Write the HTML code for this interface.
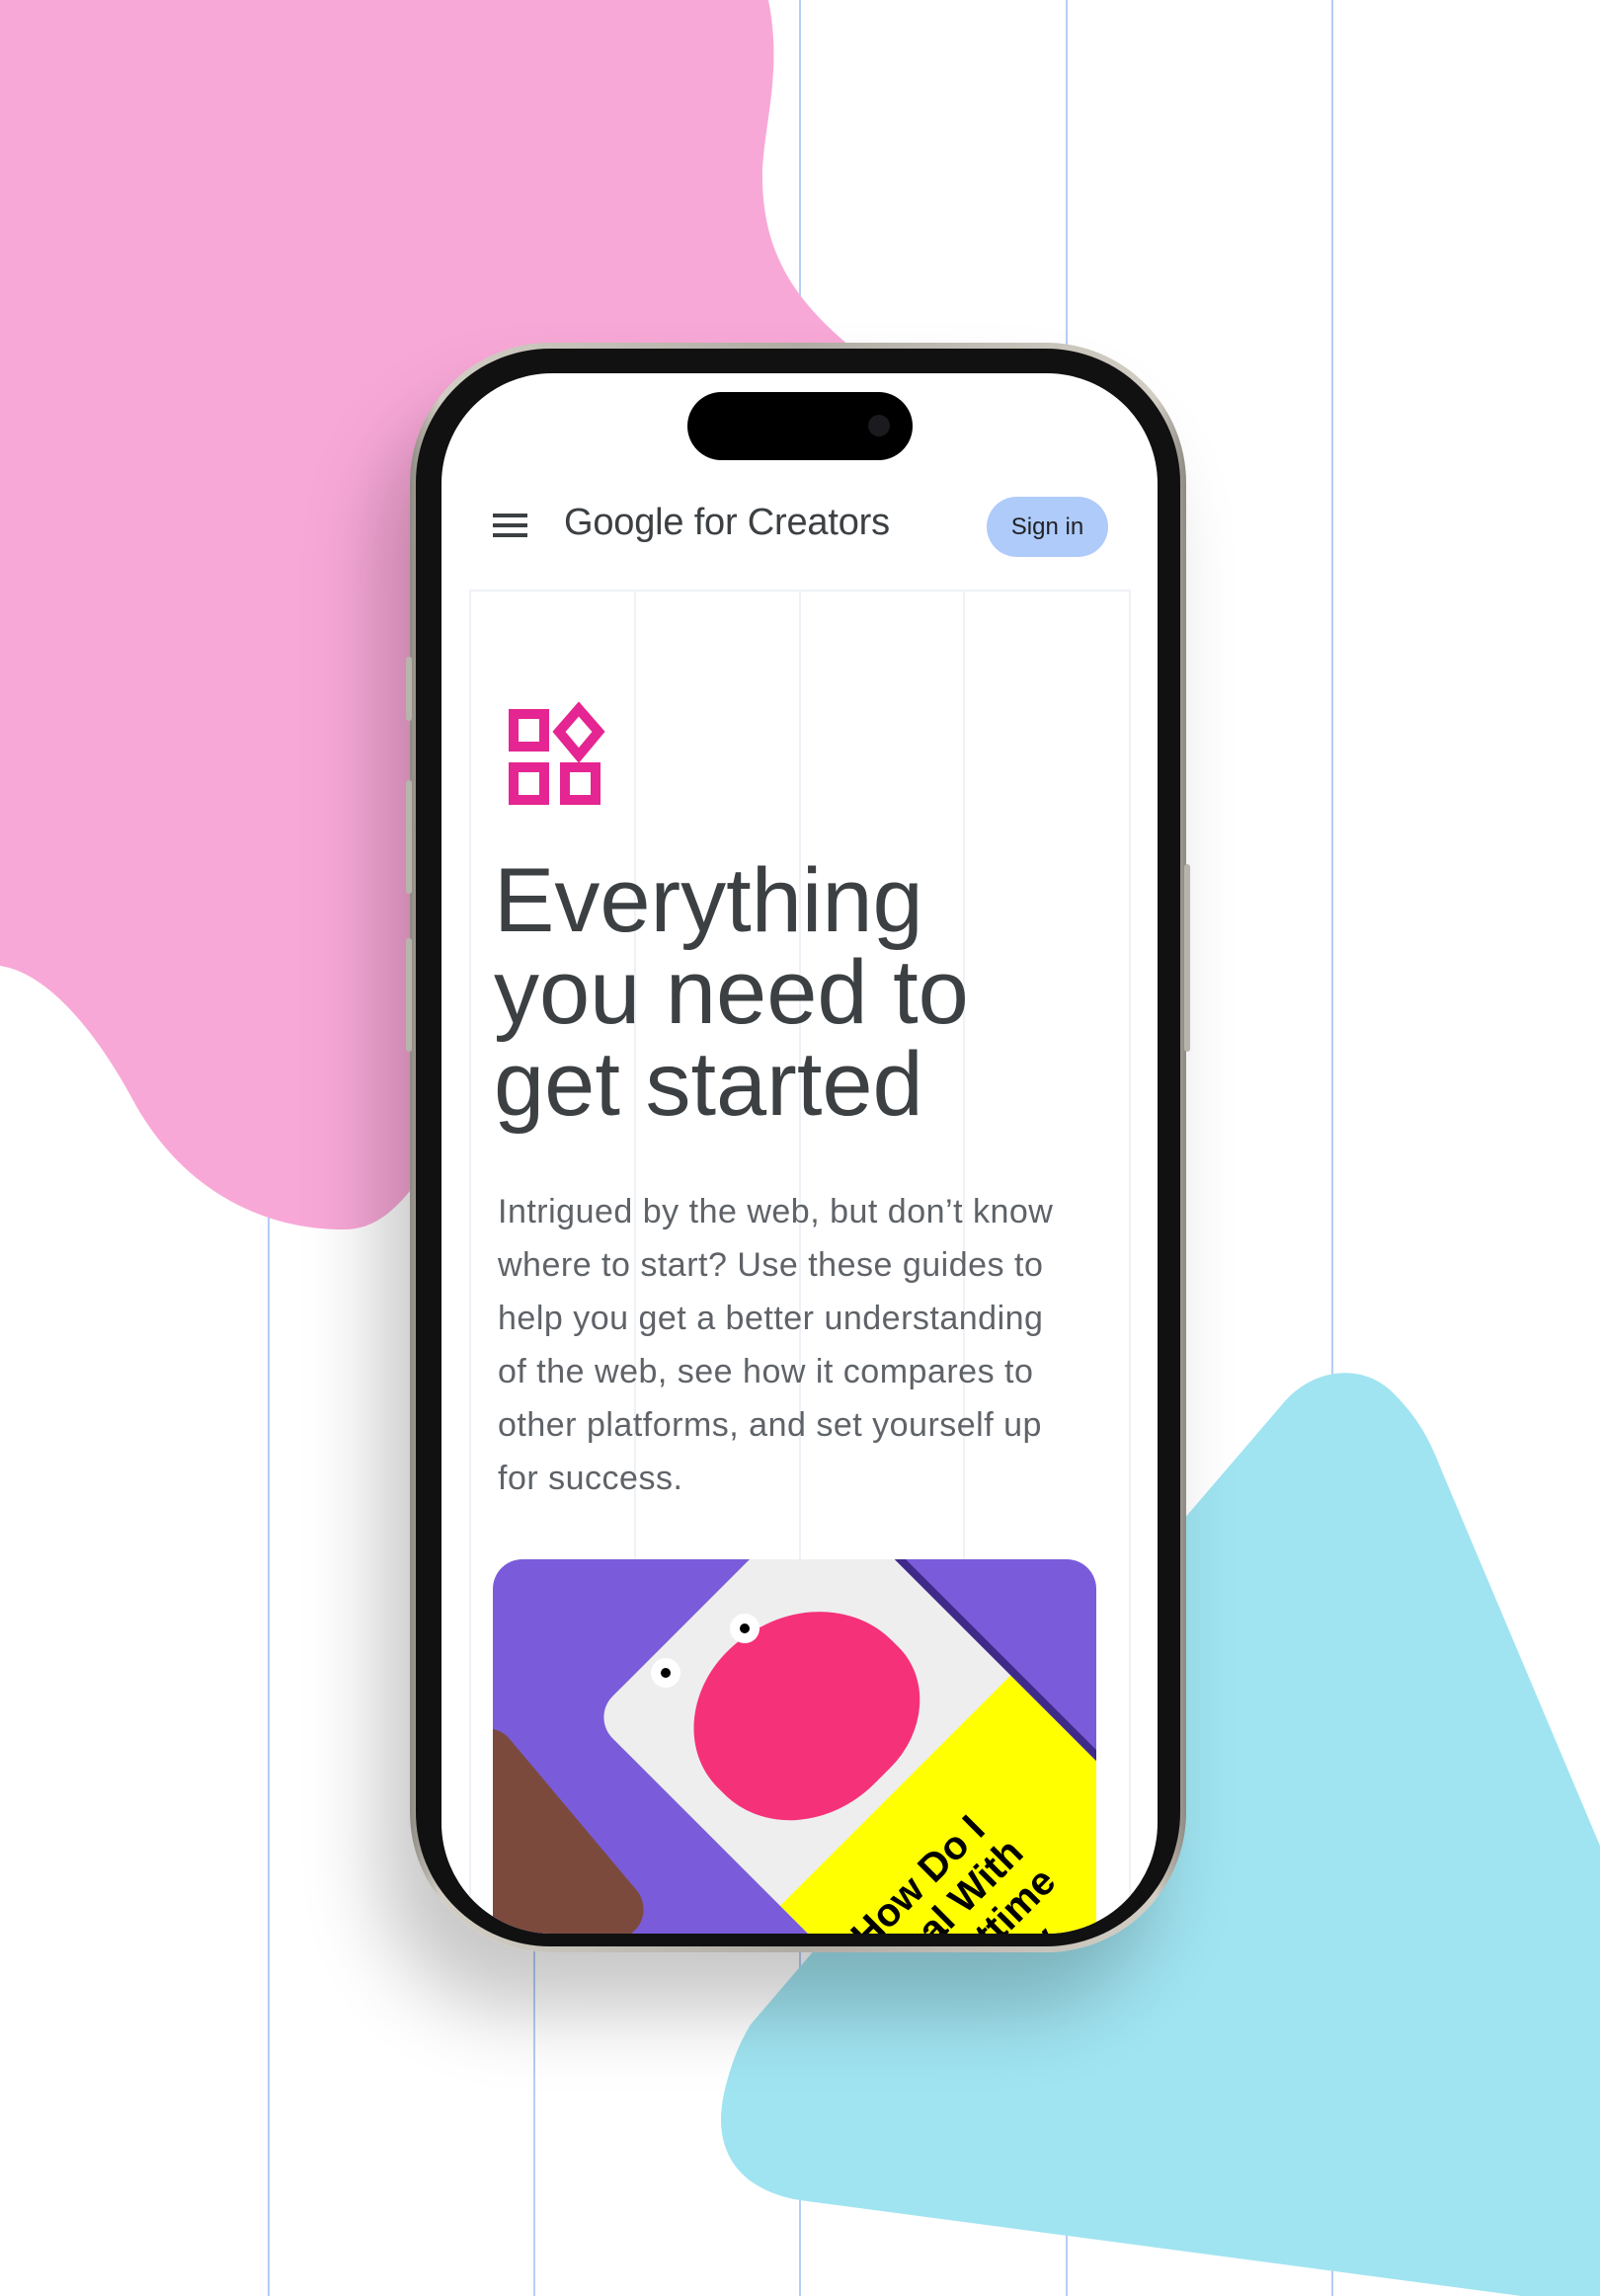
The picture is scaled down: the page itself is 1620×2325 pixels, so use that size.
<!DOCTYPE html>
<html><head><meta charset="utf-8"><style>
*{margin:0;padding:0;box-sizing:border-box}
body{width:1620px;height:2325px;position:relative;overflow:hidden;background:#fff;font-family:"Liberation Sans",sans-serif}
.vl{position:absolute;top:0;width:2px;height:2325px;background:#b5cdf7}
.abs{position:absolute}
</style></head><body>
<div class="vl" style="left:271px"></div>
<div class="vl" style="left:540px"></div>
<div class="vl" style="left:809px"></div>
<div class="vl" style="left:1079px"></div>
<div class="vl" style="left:1348px"></div>
<svg class="abs" style="left:0;top:0" width="1620" height="2325">
<path d="M0,0 L778,0 C792,70 775,120 772,170 C770,250 800,300 860,350 L860,1200 L420,1200 C400,1225 380,1245 348,1245 C260,1245 180,1200 133,1111 C100,1050 50,985 0,978 Z" fill="#f8a8d7"/>
<path d="M1300,1420 C1330,1385 1380,1380 1410,1410 C1430,1430 1445,1450 1460,1490 L1620,1869 L1620,2325 L1540,2325 L810,2228 C750,2218 720,2180 733,2120 C740,2090 748,2070 760,2050 Z" fill="#a0e4f1"/>
</svg>
<!-- shadow -->
<div class="abs" style="left:415px;top:347px;width:786px;height:1630px;border-radius:142px;box-shadow:-30px 60px 80px rgba(0,0,0,0.22)"></div>
<!-- frame -->
<div class="abs" style="left:415px;top:347px;width:786px;height:1630px;border-radius:142px;background:linear-gradient(90deg,#8f8b84,#d2cec5 4%,#b0aca3 50%,#d2cec5 96%,#8f8b84);padding:6px">
 <div style="width:100%;height:100%;border-radius:136px;background:#111"></div>
</div>
<div class="abs" style="left:411px;top:665px;width:6px;height:65px;background:#b8b4ab;border-radius:3px"></div>
<div class="abs" style="left:411px;top:790px;width:6px;height:115px;background:#b8b4ab;border-radius:3px"></div>
<div class="abs" style="left:411px;top:950px;width:6px;height:115px;background:#b8b4ab;border-radius:3px"></div>
<div class="abs" style="left:1199px;top:875px;width:6px;height:190px;background:#b8b4ab;border-radius:3px"></div>
<!-- screen -->
<div class="abs" style="left:447px;top:378px;width:725px;height:1580px;border-radius:112px;background:#fff;overflow:hidden">
 <div class="abs" style="left:249px;top:19px;width:228px;height:69px;border-radius:35px;background:#000"></div>
 <div class="abs" style="left:432px;top:42px;width:22px;height:22px;border-radius:50%;background:#1a1a1f"></div>
 <div class="abs" style="left:52px;top:142px;width:35px;height:4px;background:#3c4043"></div>
 <div class="abs" style="left:52px;top:152px;width:35px;height:4px;background:#3c4043"></div>
 <div class="abs" style="left:52px;top:162px;width:35px;height:4px;background:#3c4043"></div>
 <div class="abs" style="left:124px;top:130px;font-size:38px;color:#3c4043;white-space:nowrap;letter-spacing:-0.2px">Google for Creators</div>
 <div class="abs" style="left:552px;top:125px;width:123px;height:61px;border-radius:31px;background:#aecbfa;color:#202124;font-size:24px;text-align:center;line-height:61px">Sign in</div>
 <div class="abs" style="left:28px;top:219px;width:670px;height:1400px;border:2px solid #eef1f6"></div>
 <div class="abs" style="left:195px;top:219px;width:2px;height:1400px;background:#eef1f6"></div>
 <div class="abs" style="left:362px;top:219px;width:2px;height:1400px;background:#eef1f6"></div>
 <div class="abs" style="left:528px;top:219px;width:2px;height:1400px;background:#eef1f6"></div>
 <svg class="abs" style="left:0;top:0" width="725" height="500">
  <g fill="none" stroke="#e52592" stroke-width="10">
   <rect x="73" y="345" width="31" height="33"/>
   <rect x="73" y="399" width="31" height="33"/>
   <rect x="125" y="399" width="31" height="33"/>
   <path d="M139,340 L159,363 L139,387 L119,363 Z"/>
  </g>
 </svg>
 <div class="abs" style="left:53px;top:488px;font-size:92px;line-height:93px;color:#3c4043;letter-spacing:0px;white-space:nowrap">Everything<br>you need to<br>get started</div>
 <div class="abs" style="left:57px;top:822px;width:640px;font-size:34px;line-height:54px;color:#5f6368;white-space:nowrap;letter-spacing:0.5px">Intrigued by the web, but don’t know<br>where to start? Use these guides to<br>help you get a better understanding<br>of the web, see how it compares to<br>other platforms, and set yourself up<br>for success.</div>
 <div class="abs" style="left:52px;top:1201px;width:611px;height:420px;border-radius:30px;background:#7a5cda;overflow:hidden">
  <div class="abs" style="left:-60px;top:180px;width:160px;height:260px;border-radius:30px;background:#7b4a3c;transform:rotate(-40deg)"></div>
  <div class="abs" style="width:330px;height:560px;transform:rotate(-45deg);transform-origin:0 0;left:100px;top:160px">
   <div class="abs" style="left:8px;top:10px;width:330px;height:560px;border-radius:30px;background:#3f2a8a"></div>
   <div class="abs" style="left:0;top:0;width:330px;height:560px;border-radius:30px;background:#eee;overflow:hidden">
    <div class="abs" style="left:40px;top:50px;width:230px;height:200px;border-radius:45% 55% 40% 50%;background:#f5317a"></div>
    <div class="abs" style="left:0;top:270px;width:330px;height:300px;background:#ffff00"></div>
    <div class="abs" style="left:30px;top:330px;font-size:40px;font-weight:bold;line-height:44px;color:#000;white-space:nowrap">How Do I<br>Deal With<br>Nighttime<br>Anxiety</div>
   </div>
  </div>
  <div class="abs" style="left:160px;top:100px;width:30px;height:30px;border-radius:50%;background:#fff"></div>
  <div class="abs" style="left:170px;top:110px;width:10px;height:10px;border-radius:50%;background:#000"></div>
  <div class="abs" style="left:240px;top:55px;width:30px;height:30px;border-radius:50%;background:#fff"></div>
  <div class="abs" style="left:250px;top:65px;width:10px;height:10px;border-radius:50%;background:#000"></div>
 </div>
</div>
</body></html>
